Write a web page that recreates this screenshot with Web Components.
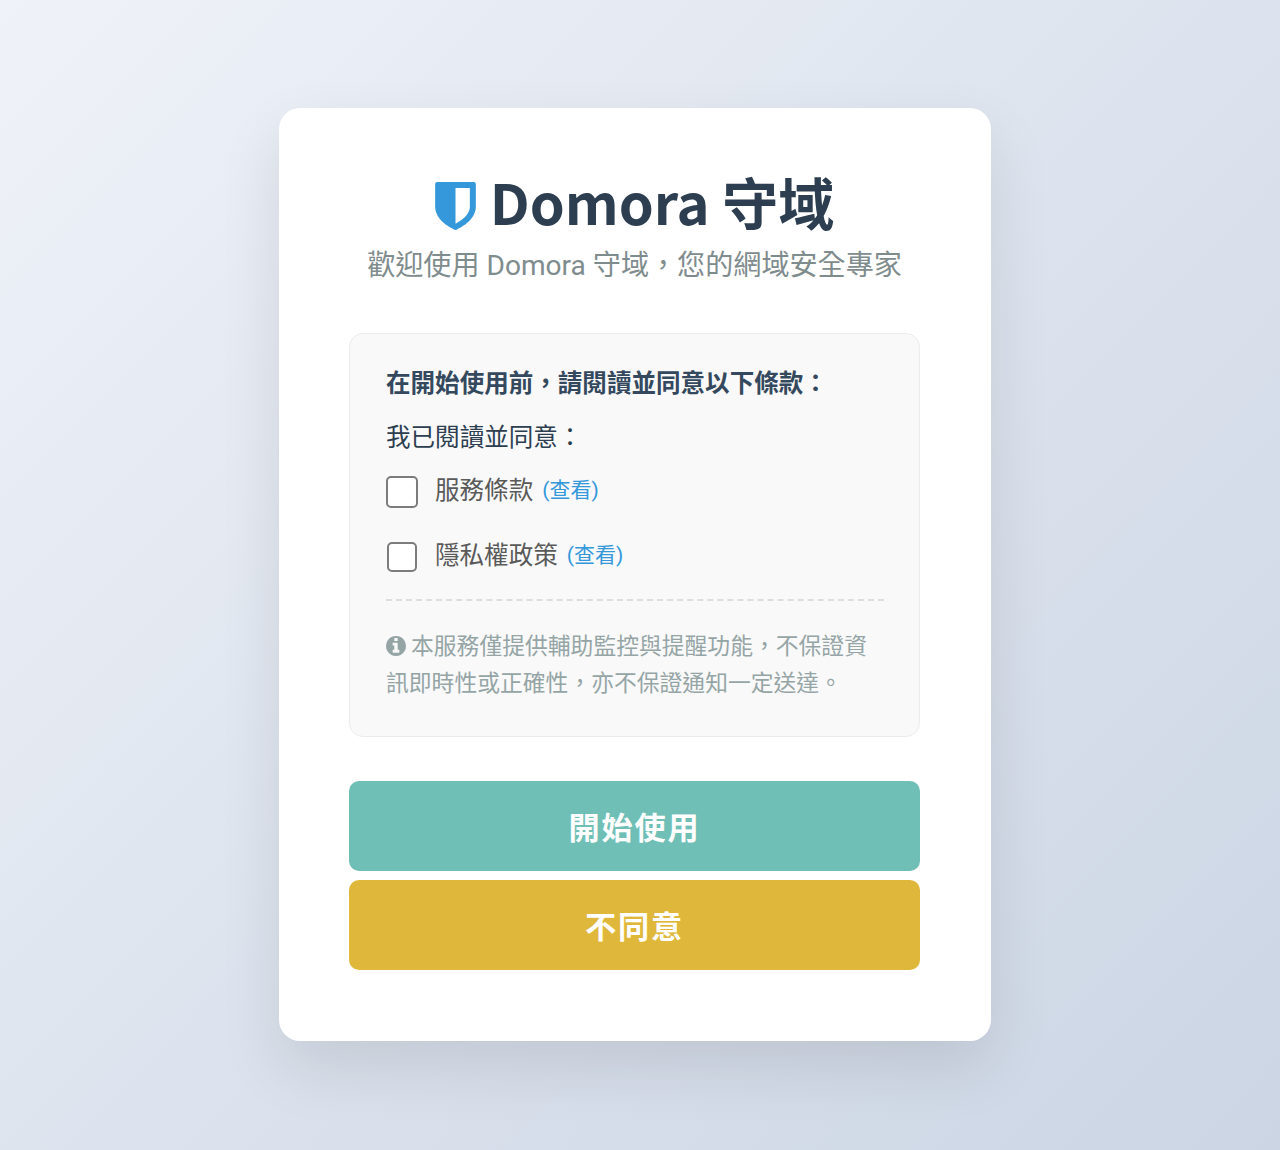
<!DOCTYPE html>
<html lang="zh-Hant">
<head>
  <meta charset="UTF-8">
  <meta name="viewport" content="width=device-width, initial-scale=1.0">
  <title>Domora 守域</title>
  <style>
    * {
      box-sizing: border-box;
    }
    body {
      margin: 0;
      min-height: 1150px;
      padding: 108px 10px 109px 0;
      display: flex;
      justify-content: center;
      background: linear-gradient(135deg, #eff2f8 0%, #cbd5e4 100%);
      font-family: Roboto, "Noto Sans CJK TC", sans-serif;
      color: #2c3e50;
    }
  </style>
</head>
<body>
  <welcome-card>
    <brand-header slot="header" name="Domora 守域">歡迎使用 Domora 守域，您的網域安全專家</brand-header>
    <terms-box>
      <span slot="title">在開始使用前，請閱讀並同意以下條款：</span>
      <span slot="intro">我已閱讀並同意：</span>
      <consent-item link="(查看)">服務條款</consent-item>
      <consent-item link="(查看)" compact>隱私權政策</consent-item>
      <info-note slot="note">本服務僅提供輔助監控與提醒功能，不保證資訊即時性或正確性，亦不保證通知一定送達。</info-note>
    </terms-box>
    <action-button slot="actions">開始使用</action-button>
    <action-button slot="actions" variant="decline">不同意</action-button>
  </welcome-card>

  <script>
    class WelcomeCard extends HTMLElement {
      constructor() {
        super();
        this.attachShadow({ mode: "open" });
        this.shadowRoot.innerHTML = `
          <style>
            :host {
              display: flex;
              flex-direction: column;
              box-sizing: border-box;
              width: 712px;
              height: 933px;
              padding: 60px 71px 71px 70px;
              background: #fff;
              border-radius: 21px;
              box-shadow: 0 27px 62px rgba(0, 0, 0, 0.1);
            }
            .actions {
              display: flex;
              flex-direction: column;
              gap: 9px;
              margin-top: 44px;
            }
          </style>
          <slot name="header"></slot>
          <slot></slot>
          <div class="actions"><slot name="actions"></slot></div>
        `;
      }
    }

    class BrandHeader extends HTMLElement {
      constructor() {
        super();
        this.attachShadow({ mode: "open" });
      }

      connectedCallback() {
        this.shadowRoot.innerHTML = `
          <style>
            :host {
              display: block;
              height: 165px;
              text-align: center;
            }
            h1 {
              display: flex;
              align-items: center;
              justify-content: center;
              gap: 14px;
              margin: 0;
              font-family: "Noto Sans CJK TC", sans-serif;
              font-size: 56px;
              font-weight: 700;
              line-height: 66px;
              white-space: nowrap;
            }
            svg {
              width: 41px;
              height: 48px;
              margin-top: 9px;
              fill: #3498db;
            }
            p {
              margin: 14px 0 0;
              font-size: 28.1px;
              line-height: 36px;
              color: #7f8c8d;
              white-space: nowrap;
            }
          </style>
          <h1>
            <svg viewBox="0 0 122 144" aria-hidden="true">
              <path fill-rule="evenodd" d="M6 0H116Q122 0 122 6V74C122 110 84 134 61 144C38 134 0 110 0 74V6Q0 0 6 0ZM61 18V125C80 115 104 98 104 75V18Z"/>
            </svg>
            <span>${this.getAttribute("name")}</span>
          </h1>
          <p><slot></slot></p>
        `;
      }
    }

    class TermsBox extends HTMLElement {
      constructor() {
        super();
        this.attachShadow({ mode: "open" });
        this.shadowRoot.innerHTML = `
          <style>
            :host {
              display: block;
              box-sizing: border-box;
              height: 404px;
              padding: 31px 35px 0 36px;
              background: #f9f9f9;
              border: 1px solid #ececec;
              border-radius: 14px;
            }
            h2, p {
              margin: 0;
              font-size: 24.55px;
              line-height: 38px;
            }
            h2 {
              font-weight: 700;
              color: #34495e;
            }
            p {
              margin-top: 16px;
            }
            .note {
              margin-top: 12px;
              padding-top: 28px;
              border-top: 2px dashed #ddd;
            }
          </style>
          <h2><slot name="title"></slot></h2>
          <p><slot name="intro"></slot></p>
          <slot></slot>
          <div class="note"><slot name="note"></slot></div>
        `;
      }
    }

    class ConsentItem extends HTMLElement {
      constructor() {
        super();
        this.attachShadow({ mode: "open" });
      }

      connectedCallback() {
        this.shadowRoot.innerHTML = `
          <style>
            :host {
              display: block;
              height: 65px;
            }
            label {
              display: flex;
              align-items: center;
              padding-top: 15px;
              font-size: 24.55px;
              line-height: 38px;
              color: #5a5a5a;
            }
            input {
              appearance: none;
              box-sizing: border-box;
              width: 32px;
              height: 32px;
              margin: 2px 17px 0 0;
              background: #fff;
              border: 2px solid #7c7c7c;
              border-radius: 5px;
            }
            :host([compact]) input {
              width: 30px;
              height: 30px;
              margin: 1px 18px 0 1px;
            }
            a {
              margin: -2px 0 0 9px;
              font-size: 21px;
              color: #3498db;
              text-decoration: none;
            }
          </style>
          <label>
            <input type="checkbox">
            <slot></slot>
            <a href="#">${this.getAttribute("link")}</a>
          </label>
        `;
      }
    }

    class InfoNote extends HTMLElement {
      constructor() {
        super();
        this.attachShadow({ mode: "open" });
        this.shadowRoot.innerHTML = `
          <style>
            :host {
              display: block;
              font-size: 22.8px;
              line-height: 36.8px;
              color: #95a5a6;
            }
            svg {
              width: 20px;
              height: 20px;
              margin-right: 5px;
              vertical-align: -2px;
              fill: currentColor;
            }
          </style>
          <svg viewBox="128 128 1536 1536" aria-hidden="true"><path d="M1152 1376v-160q0-14-9-23t-23-9h-96v-512q0-14-9-23t-23-9h-320q-14 0-23 9t-9 23v160q0 14 9 23t23 9h96v320h-96q-14 0-23 9t-9 23v160q0 14 9 23t23 9h448q14 0 23-9t9-23zm-128-896v-160q0-14-9-23t-23-9h-192q-14 0-23 9t-9 23v160q0 14 9 23t23 9h192q14 0 23-9t9-23zm640 416q0 209-103 385.5t-279.5 279.5-385.5 103-385.5-103-279.5-279.5-103-385.5 103-385.5 279.5-279.5 385.5-103 385.5 103 279.5 279.5 103 385.5z"/></svg><slot></slot>
        `;
      }
    }

    class ActionButton extends HTMLElement {
      constructor() {
        super();
        this.attachShadow({ mode: "open" });
        this.shadowRoot.innerHTML = `
          <style>
            :host {
              display: block;
              --button-color: #70bfb6;
            }
            :host([variant="decline"]) {
              --button-color: #dfb83b;
            }
            button {
              display: block;
              width: 100%;
              height: 90px;
              padding: 0 0 2px;
              border: none;
              border-radius: 10px;
              background: var(--button-color);
              color: #fff;
              font-family: inherit;
              font-size: 31.2px;
              font-weight: 700;
              letter-spacing: 1.8px;
              cursor: pointer;
            }
          </style>
          <button><slot></slot></button>
        `;
      }
    }

    customElements.define("welcome-card", WelcomeCard);
    customElements.define("brand-header", BrandHeader);
    customElements.define("terms-box", TermsBox);
    customElements.define("consent-item", ConsentItem);
    customElements.define("info-note", InfoNote);
    customElements.define("action-button", ActionButton);
  </script>
</body>
</html>
